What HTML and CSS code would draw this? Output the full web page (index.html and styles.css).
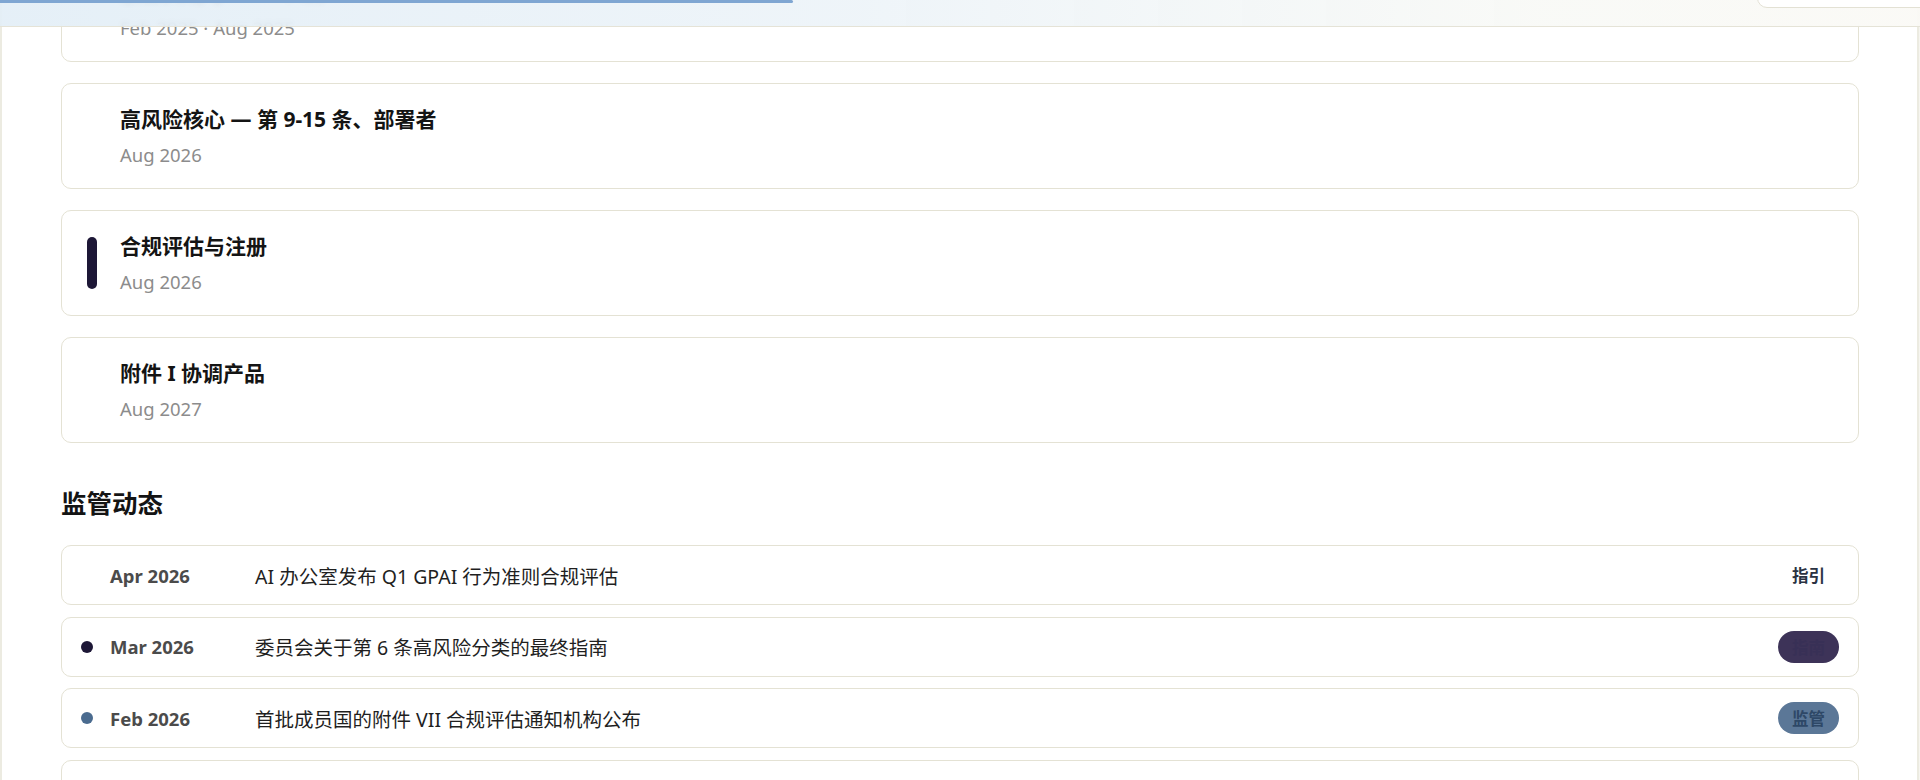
FILE: index.html
```html
<!DOCTYPE html>
<html lang="zh-CN">
<head>
<meta charset="utf-8">
<title>EU AI Act 时间线</title>
<link rel="stylesheet" href="styles.css">
</head>
<body>
<div class="page">
  <header class="topbar">
    <div class="progress"></div>
    <div class="corner-btn"></div>
  </header>
  <main class="content">
    <section class="phases">
      <div class="phase">
        <span class="phase-mark"></span>
        <div class="phase-body">
          <div class="phase-title">禁止实践与 GPAI 义务</div>
          <div class="phase-date">Feb 2025 · Aug 2025</div>
        </div>
      </div>
      <div class="phase">
        <span class="phase-mark"></span>
        <div class="phase-body">
          <div class="phase-title">高风险核心 — 第 9-15 条、部署者</div>
          <div class="phase-date">Aug 2026</div>
        </div>
      </div>
      <div class="phase">
        <span class="phase-mark is-active"></span>
        <div class="phase-body">
          <div class="phase-title">合规评估与注册</div>
          <div class="phase-date">Aug 2026</div>
        </div>
      </div>
      <div class="phase">
        <span class="phase-mark"></span>
        <div class="phase-body">
          <div class="phase-title">附件 I 协调产品</div>
          <div class="phase-date">Aug 2027</div>
        </div>
      </div>
    </section>

    <h2 class="section-title">监管动态</h2>

    <ul class="updates">
      <li class="update">
        <span class="dot"></span>
        <span class="u-date">Apr 2026</span>
        <span class="u-title">AI 办公室发布 Q1 GPAI 行为准则合规评估</span>
        <span class="tag tag-plain">指引</span>
      </li>
      <li class="update">
        <span class="dot dot-dark"></span>
        <span class="u-date">Mar 2026</span>
        <span class="u-title">委员会关于第 6 条高风险分类的最终指南</span>
        <span class="tag tag-dark">指南</span>
      </li>
      <li class="update">
        <span class="dot dot-blue"></span>
        <span class="u-date">Feb 2026</span>
        <span class="u-title">首批成员国的附件 VII 合规评估通知机构公布</span>
        <span class="tag tag-blue">监管</span>
      </li>
      <li class="update">
        <span class="dot"></span>
        <span class="u-date">Jan 2026</span>
        <span class="u-title">欧洲议会就数字综合法案中 AI 法案修正内容达成一致</span>
        <span class="tag tag-plain">立法</span>
      </li>
    </ul>
  </main>
</div>
</body>
</html>
```

FILE: styles.css
```css
* { box-sizing: border-box; }

html, body {
  margin: 0;
  padding: 0;
  background: #f6f5ef;
  font-family: "Noto Sans", "Noto Sans CJK SC", sans-serif;
  color: #151515;
  overflow: hidden;
}

.page {
  width: 1919px;
  height: 780px;
  background: #ffffff;
  border-left: 2px solid #ecebe1;
  border-right: 2px solid #ecebe1;
  overflow: hidden;
}

.topbar {
  position: fixed;
  top: 0;
  left: 0;
  right: 0;
  height: 27px;
  background: linear-gradient(90deg, rgba(225, 237, 246, 0.87) 0%, rgba(236, 243, 248, 0.87) 45%, rgba(248, 249, 246, 0.9) 80%, rgba(250, 249, 245, 0.9) 100%);
  backdrop-filter: blur(3px);
  border-bottom: 1px solid #e5e3d7;
  z-index: 10;
}

.progress {
  position: absolute;
  top: 0;
  left: 0;
  width: 793px;
  height: 3px;
  background: #7fa6d2;
  border-radius: 0 3px 3px 0;
}

.corner-btn {
  position: absolute;
  top: -30px;
  right: -12px;
  width: 175px;
  height: 38px;
  background: #ffffff;
  border: 1px solid #e3e1d4;
  border-radius: 10px;
}

.content {
  padding: 0 58px 0 59px;
  margin-top: -44px;
}

.phases {
  display: flex;
  flex-direction: column;
  gap: 21px;
}

.phase {
  display: flex;
  align-items: center;
  gap: 23px;
  padding: 21px 24px 21px 25px;
  border: 1px solid #e4e2d4;
  border-radius: 10px;
  background: #ffffff;
}

.phase-mark {
  flex: none;
  width: 10px;
  height: 52px;
  border-radius: 5px;
  background: transparent;
}

.phase-mark.is-active {
  background: #1d1736;
}

.phase-title {
  font-size: 21px;
  line-height: 28px;
  font-weight: 700;
  color: #141414;
}

.phase-date {
  margin-top: 10px;
  font-size: 18.5px;
  line-height: 24px;
  color: #8c8c8c;
}

.section-title {
  margin: 44px 0 26px 0;
  font-size: 25.5px;
  line-height: 32px;
  font-weight: 700;
  color: #141414;
}

.updates {
  list-style: none;
  margin: 0;
  padding: 0;
  display: flex;
  flex-direction: column;
  gap: 11.5px;
}

.update {
  height: 60px;
  display: grid;
  grid-template-columns: 12px 128px 1fr auto;
  column-gap: 17px;
  align-items: center;
  padding: 0 19px 0 19px;
  border: 1px solid #e4e2d4;
  border-radius: 10px;
  background: #ffffff;
}

.dot {
  width: 12px;
  height: 12px;
  border-radius: 50%;
  background: transparent;
}

.dot-dark { background: #1d1736; }
.dot-blue { background: #4a6b8f; }

.u-date {
  font-size: 18.5px;
  font-weight: 700;
  color: #4b4b4b;
}

.u-title {
  font-size: 19.5px;
  color: #1f1f1f;
  white-space: nowrap;
}

.tag {
  min-width: 60px;
  height: 32px;
  padding: 0 14px;
  border-radius: 16px;
  display: inline-flex;
  align-items: center;
  justify-content: center;
  font-size: 16.5px;
  font-weight: 700;
}

.tag-plain {
  color: #2a3242;
  background: transparent;
}

.tag-dark {
  background: #3d3358;
  color: #383056;
}

.tag-blue {
  background: #5b7797;
  color: #2e4867;
}
```
